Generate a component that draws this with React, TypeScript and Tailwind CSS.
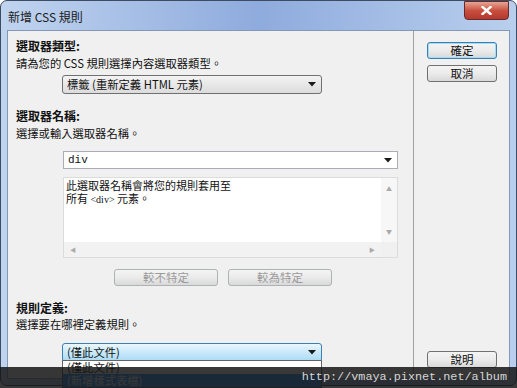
import React from 'react';

const cjk = { fontFamily: '"Noto Sans CJK TC", "Liberation Sans", sans-serif' };
const mono = { fontFamily: '"Liberation Mono", monospace' };

const Arrow: React.FC = () => (
    <svg width="8" height="5" viewBox="0 0 8 5" className="shrink-0">
        <path d="M0 0 H8 L4 4.5 Z" fill="#1a1a1a" />
    </svg>
);

const WinButton: React.FC<{ label: string; focused?: boolean; disabled?: boolean; className?: string }> = ({ label, focused, disabled, className }) => (
    <div
        className={`flex items-center justify-center rounded-[3px] border text-[11.5px] leading-none bg-gradient-to-b from-[#f4f4f4] via-[#ebebeb] to-[#d9d9d9] ${focused ? 'border-[#3c7fb1] shadow-[inset_0_0_0_1px_#9fdcf7]' : disabled ? 'border-[#adb2b5]' : 'border-[#707070]'} ${disabled ? 'text-[#9a9a9a]' : 'text-[#111]'} ${className ?? ''}`}
    >
        {label}
    </div>
);

export default function App() {
    return (
        <div className="relative w-[517px] h-[388px] bg-white overflow-hidden" style={cjk}>
            <div className="w-[517px] h-[386px] rounded-[7px] border border-[#3d4b63] bg-gradient-to-r from-[#c0d4ef] via-[#8eabdd] to-[#b9cfed] px-[6px] flex flex-col">
                {/* Title bar */}
                <div className="h-[29px] flex items-center justify-between shrink-0">
                    <span className="text-[12px] text-[#1b1b1b] pl-[1px] pt-[2px]">新增 CSS 規則</span>
                    <div className="mt-[-10px] mr-[1px] w-[45px] h-[19px] rounded-b-[4px] border border-[#6a2a2a] bg-gradient-to-b from-[#e5a597] via-[#c9503f] to-[#b4382e] flex items-center justify-center">
                        <svg width="11" height="9" viewBox="0 0 11 9">
                            <path d="M1.5 1 L9.5 8 M9.5 1 L1.5 8" stroke="#fff" strokeWidth="2.4" strokeLinecap="square" />
                        </svg>
                    </div>
                </div>

                {/* Body */}
                <div className="h-[349px] shrink-0 border border-[#8497b7] bg-[#f0f0f0] flex">
                    {/* Left column */}
                    <div className="w-[406px] border-r border-[#a0a0a0] pl-[8px] pt-[7px] text-[11.3px] text-[#111]">
                        <div className="font-bold text-[12px] leading-[16px]">選取器類型:</div>
                        <div className="leading-[16px] mt-[1px]">請為您的 CSS 規則選擇內容選取器類型。</div>
                        <div className="ml-[46px] mt-[4px] w-[260px] h-[19px] rounded-[3px] border border-[#707070] bg-gradient-to-b from-[#f3f3f3] to-[#dcdcdc] flex items-center justify-between pl-[4px] pr-[5px]">
                            <span>標籤 (重新定義 HTML 元素)</span>
                            <Arrow />
                        </div>

                        <div className="font-bold text-[12px] leading-[16px] mt-[14px]">選取器名稱:</div>
                        <div className="leading-[16px] mt-[1px]">選擇或輸入選取器名稱。</div>
                        <div className="ml-[47px] mt-[10px] w-[335px] h-[18px] border border-[#abadb3] bg-white flex items-center justify-between pl-[4px] pr-[5px]">
                            <span className="text-[11px]" style={mono}>div</span>
                            <Arrow />
                        </div>
                        <div className="ml-[47px] mt-[8px] w-[335px] h-[81px] border border-[#dcdcdc] bg-white flex flex-col">
                            <div className="flex flex-1">
                                <div className="flex-1 px-[2px] pt-[1px] text-[11px] leading-[13px]">
                                    <div className="h-[13px]">此選取器名稱會將您的規則套用至</div>
                                    <div className="h-[13px]">所有 <span className="text-[10px]" style={{ fontFamily: '"Liberation Serif", serif' }}>&lt;div&gt;</span> 元素。</div>
                                </div>
                                <div className="w-[16px] bg-[#f7f7f7] flex flex-col items-center justify-between py-[6px] text-[6px] text-[#aaa]">
                                    <span>▲</span>
                                    <span>▼</span>
                                </div>
                            </div>
                            <div className="h-[15px] flex">
                                <div className="flex-1 bg-[#f2f2f2] flex items-center justify-between px-[6px] text-[6px] text-[#aaa]">
                                    <span>◀</span>
                                    <span>▶</span>
                                </div>
                                <div className="w-[16px] bg-[#f0f0f0]" />
                            </div>
                        </div>
                        <div className="flex gap-[10px] ml-[98px] mt-[11px]">
                            <WinButton label="較不特定" disabled className="w-[104px] h-[17px]" />
                            <WinButton label="較為特定" disabled className="w-[104px] h-[17px]" />
                        </div>

                        <div className="font-bold text-[12px] leading-[16px] mt-[14px]">規則定義:</div>
                        <div className="leading-[16px]">選擇要在哪裡定義規則。</div>
                        <div className="ml-[46px] mt-[11px] w-[260px] h-[19px] rounded-[3px] border border-[#3c7fb1] bg-gradient-to-b from-[#eaf6fd] via-[#c9e9fa] to-[#a9d9f4] flex items-center justify-between pl-[4px] pr-[5px]">
                            <span>(僅此文件)</span>
                            <Arrow />
                        </div>
                    </div>

                    {/* Right column */}
                    <div className="flex-1 flex flex-col items-start pt-[11px] pl-[13px]">
                        <WinButton label="確定" focused className="w-[70px] h-[17px]" />
                        <WinButton label="取消" className="w-[70px] h-[17px] mt-[6px]" />
                        <div className="flex-1" />
                        <WinButton label="說明" className="w-[70px] h-[17px] mb-[10px]" />
                    </div>
                </div>
            </div>

            {/* Open dropdown list */}
            <div className="absolute left-[62px] top-[360px] w-[260px] border border-[#646464] bg-white text-[11.3px] leading-[13px]">
                <div className="px-[4px] text-[#111]">(僅此文件)</div>
                <div className="px-[4px] bg-[#3399ff] text-white">(新增樣式表檔)</div>
            </div>

            {/* Watermark band */}
            <div className="absolute left-0 right-0 top-[367px] h-[21px] bg-[#151515]/85 flex justify-end items-center pr-[10px]">
                <span className="text-[11.8px] text-[#d6d6d6]" style={mono}>http://vmaya.pixnet.net/album</span>
            </div>
        </div>
    );
}
